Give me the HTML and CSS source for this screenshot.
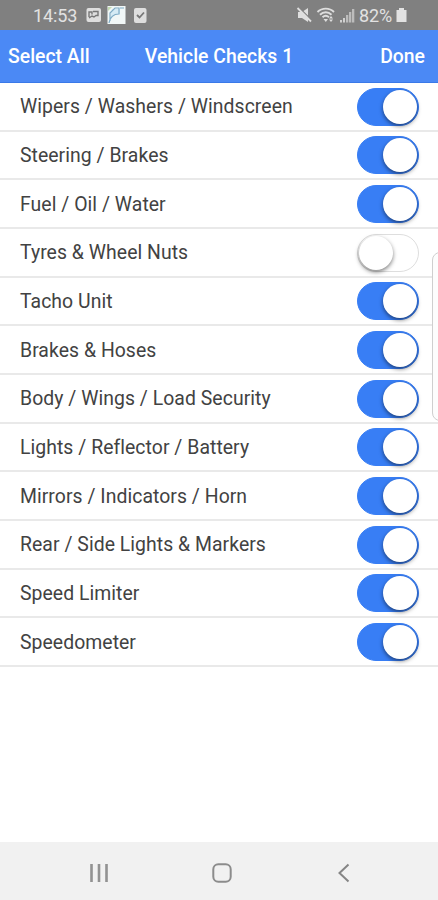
FILE: index.html
```html
<!DOCTYPE html>
<html lang="en">
<head>
<meta charset="utf-8">
<title>Vehicle Checks 1</title>
<link rel="stylesheet" href="styles.css">
</head>
<body>
<div class="screen">
  <div class="status">
    <span class="time">14:53</span>
    <svg class="status-left" width="64" height="22" viewBox="84 4 64 22">
      <rect x="86.500" y="8" width="14.500" height="14" rx="2" fill="#dedede"/>
      <path d="M89 17v-5h3v2.500M93 11.500h5v4h-2l-2 1.500-2-1-3 2" fill="none" stroke="#777" stroke-width="1.400"/>
      <rect x="107.500" y="6" width="18" height="18" fill="#f1f7f7"/>
      <path d="M112 9h8v5h-5l-4 5v-6z" fill="#d5ebf5"/>
      <path d="M109 23c1-6 5-9 10-9V8h-4l-5 5v8M120 8h4" fill="none" stroke="#7eabc5" stroke-width="1.200"/>
      <path d="M108 7h4l-4 4z" fill="#c4dcb2"/>
      <rect x="134" y="8" width="12.500" height="15" rx="2" fill="#dedede"/>
      <path d="M137 15l2.500 2.500 4.500-5" fill="none" stroke="#777" stroke-width="1.800"/>
    </svg>
    <svg class="status-right" width="60" height="22" viewBox="296 4 60 22">
      <path d="M298 12h4l6-4v14l-6-4h-4z" fill="#dedede"/>
      <path d="M298.500 7l13 13" stroke="#808080" stroke-width="1.300"/>
      <path d="M297.500 8l13.500 13.500" stroke="#dedede" stroke-width="1.800"/>
      <path d="M317.500 12c4.500-4.500 12-4.500 16.500 0M320 14.700c3.400-3.200 8.200-3.200 11.500 0M322.500 17.300c2-1.800 4.500-1.800 6.500 0" fill="none" stroke="#dedede" stroke-width="1.900"/>
      <path d="M323.500 19h4.500l-2.200 3zM329 18.500l2-2.500 2 2.500zM329 19.500h4l-2 2.500z" fill="#dedede"/>
      <path d="M340 20h2v2.500h-2zM343 18h2v4.500h-2z" fill="#d0d0d0"/>
      <path d="M346 15h2.300v7.500H346zM349 12h2.300v10.500H349zM352 9h2.300v13.500H352z" fill="#bcbcbc"/>
    </svg>
    <span class="percent">82%</span>
    <svg class="battery" width="11" height="16" viewBox="0 0 11 16"><path d="M3 1h5v2h2.500v12H.5V3H3z" fill="#e2e2e2"/></svg>
  </div>
  <header class="bar">
    <span class="select">Select All</span>
    <span class="title">Vehicle Checks 1</span>
    <span class="done">Done</span>
  </header>
  <ul class="checks">
    <li><span>Wipers / Washers / Windscreen</span><i class="switch on"></i></li>
    <li><span>Steering / Brakes</span><i class="switch on"></i></li>
    <li><span>Fuel / Oil / Water</span><i class="switch on"></i></li>
    <li><span>Tyres &amp; Wheel Nuts</span><i class="switch"></i></li>
    <li><span>Tacho Unit</span><i class="switch on"></i></li>
    <li><span>Brakes &amp; Hoses</span><i class="switch on"></i></li>
    <li><span>Body / Wings / Load Security</span><i class="switch on"></i></li>
    <li><span>Lights / Reflector / Battery</span><i class="switch on"></i></li>
    <li><span>Mirrors / Indicators / Horn</span><i class="switch on"></i></li>
    <li><span>Rear / Side Lights &amp; Markers</span><i class="switch on"></i></li>
    <li><span>Speed Limiter</span><i class="switch on"></i></li>
    <li><span>Speedometer</span><i class="switch on"></i></li>
  </ul>
  <div class="edge"></div>
  <nav class="nav">
    <svg width="20" height="20" viewBox="0 0 20 20"><path d="M2.500 1v18M10 1v18M17.500 1v18" stroke="#929292" stroke-width="2.600"/></svg>
    <svg width="20" height="20" viewBox="0 0 20 20"><rect x="1.300" y="1.300" width="17.400" height="17.400" rx="5" fill="none" stroke="#8c8c8c" stroke-width="2"/></svg>
    <svg width="20" height="20" viewBox="0 0 20 20"><path d="M14.500 1.500L5.500 10l9 8.500" fill="none" stroke="#858585" stroke-width="2"/></svg>
  </nav>
</div>
</body>
</html>
```
FILE: styles.css
```css
* { box-sizing: border-box; }
body { margin: 0; font-family: Roboto, sans-serif; background: #fff; }
.screen {
  position: relative;
  display: flex;
  flex-direction: column;
  width: 438px;
  height: 900px;
  overflow: hidden;
}
svg { display: block; flex: none; }
.status {
  display: flex;
  align-items: center;
  height: 30px;
  padding: 0 31px 0 33px;
  background: #808080;
  color: #e2e2e2;
  font-size: 18px;
}
.time { width: 51px; padding-top: 1px; letter-spacing: -0.1px; }
.status-right { margin-left: auto; }
.percent { width: 36px; margin-left: 3px; padding-top: 1px; letter-spacing: -0.1px; }
.battery { margin-left: 1px; }
.bar {
  display: grid;
  grid-template-columns: 1fr auto 1fr;
  align-items: center;
  height: 53px;
  padding: 0 13px 0 8px;
  background: #4b89f5;
  border-bottom: 1px solid #3a79e8;
  color: #fff;
  font-size: 19.400px;
  font-weight: 500;
  white-space: nowrap;
}
.title { padding-left: 5px; }
.done { text-align: right; }
.checks { margin: 0; padding: 0; list-style: none; flex: 1; }
.checks li {
  display: flex;
  align-items: center;
  justify-content: space-between;
  height: 48.670px;
  padding: 1px 19px 0 20px;
  border-bottom: 2px solid #e9e9e9;
  color: #424242;
  font-size: 19.400px;
  letter-spacing: 0.050px;
}
.switch {
  display: flex;
  width: 62px;
  height: 38px;
  padding: 1px;
  border: 1px solid #dedede;
  border-radius: 19px;
  background: #fff;
}
.switch::before {
  content: "";
  width: 34px;
  height: 34px;
  border-radius: 50%;
  background: #fff;
  box-shadow: 0 2px 4px rgba(0, 0, 0, 0.5);
}
.switch.on {
  justify-content: flex-end;
  background: #387ef5;
  border-color: #387ef5;
}
.edge {
  position: absolute;
  left: 432px;
  top: 252px;
  width: 20px;
  height: 169px;
  border: 1px solid #cfcfcf;
  border-radius: 8px;
  background: #fdfdfd;
}
.nav {
  display: flex;
  align-items: center;
  justify-content: space-between;
  height: 58px;
  padding: 3px 84px 0 89px;
  background: #f1f1f1;
}
```
